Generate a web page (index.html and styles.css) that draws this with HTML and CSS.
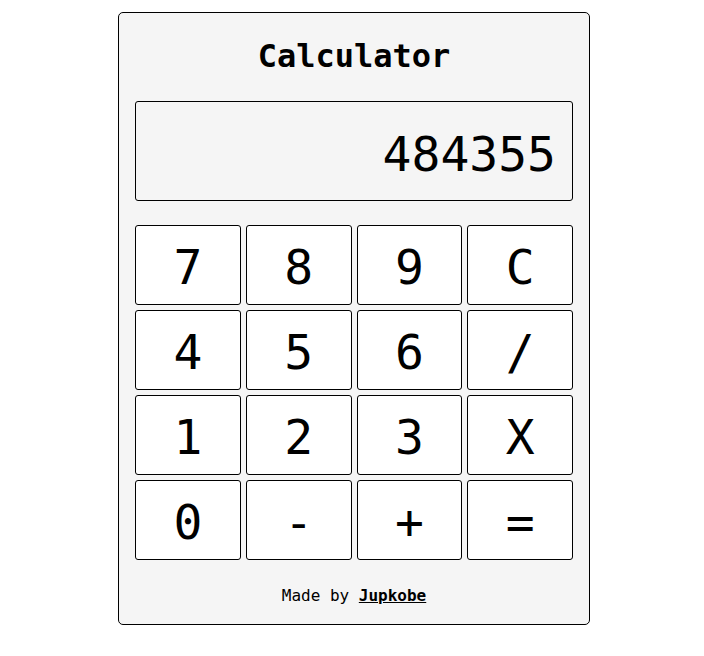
FILE: index.html
```html
<!DOCTYPE html>
<html lang="en">
<head>
<meta charset="utf-8">
<title>Calculator</title>
<link rel="stylesheet" href="styles.css">
</head>
<body>
<main class="calc">
  <h1 class="title">Calculator</h1>
  <div class="display">484355</div>
  <div class="keys">
    <button class="key">7</button>
    <button class="key">8</button>
    <button class="key">9</button>
    <button class="key">C</button>
    <button class="key">4</button>
    <button class="key">5</button>
    <button class="key">6</button>
    <button class="key">/</button>
    <button class="key">1</button>
    <button class="key">2</button>
    <button class="key">3</button>
    <button class="key">X</button>
    <button class="key">0</button>
    <button class="key">-</button>
    <button class="key">+</button>
    <button class="key">=</button>
  </div>
  <p class="footer">Made by <a class="author" href="#">Jupkobe</a></p>
</main>
</body>
</html>
```
FILE: styles.css
```css
* { box-sizing: border-box; }
html, body { background: #ffffff; }
body {
  margin: 0;
  padding: 12px 0 0 4px;
  display: flex;
  justify-content: center;
  font-family: "DejaVu Sans Mono", "Liberation Mono", monospace;
  color: #000;
}
.calc {
  width: 472px;
  background: #f5f5f5;
  border: 1px solid #000;
  border-radius: 5px;
  padding: 16px 16px 18px;
  display: flex;
  flex-direction: column;
}
.title {
  margin: 0 0 25px;
  padding-top: 7px;
  font-size: 32px;
  line-height: 40px;
  font-weight: bold;
  text-align: center;
}
.display {
  height: 100px;
  border: 1px solid #000;
  border-radius: 3px;
  background: #f5f5f5;
  display: flex;
  align-items: center;
  justify-content: flex-end;
  padding: 6px 16px 0 0;
  font-size: 48px;
  line-height: 56px;
}
.keys {
  margin-top: 24px;
  display: grid;
  grid-template-columns: repeat(4, 1fr);
  grid-auto-rows: 80px;
  gap: 5px;
}
.key {
  background: #fff;
  border: 1px solid #000;
  border-radius: 3px;
  font-family: inherit;
  font-size: 48px;
  line-height: 56px;
  color: #000;
  padding: 4px 0 0;
  margin: 0;
}
.footer {
  margin: 26px 0 0;
  font-size: 16px;
  line-height: 20px;
  text-align: center;
}
.author {
  color: #000;
  font-weight: bold;
  text-decoration: underline;
}
```
